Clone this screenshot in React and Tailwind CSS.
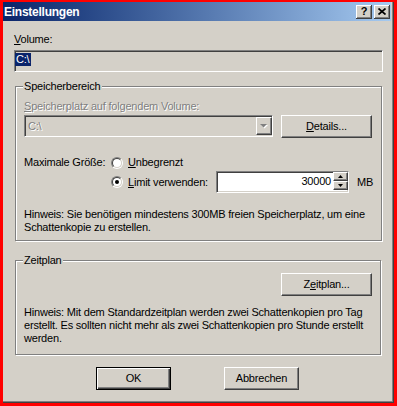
import React from 'react';

const sunken =
  'border border-t-[#808080] border-l-[#808080] border-r-white border-b-white shadow-[inset_1px_1px_0_#404040,inset_-1px_-1px_0_#d4d0c8]';
const raised =
  'border border-t-white border-l-white border-r-[#404040] border-b-[#404040] shadow-[inset_-1px_-1px_0_#808080]';
const disabledText = 'text-[#808080] [text-shadow:1px_1px_0_#fff]';

function Button({ children, className = 'w-[91px]' }) {
  return (
    <div className={`h-[23px] flex items-center justify-center ${raised} ${className}`}>
      <span className="leading-[13px]">{children}</span>
    </div>
  );
}

function Radio({ checked }) {
  return (
    <span className="w-[12px] h-[12px] shrink-0 flex rounded-full border border-t-[#808080] border-l-[#808080] border-r-white border-b-white">
      <span className="flex-1 flex items-center justify-center rounded-full border border-t-[#404040] border-l-[#404040] border-r-[#d4d0c8] border-b-[#d4d0c8] bg-white">
        {checked && <span className="w-[4px] h-[4px] rounded-full bg-black" />}
      </span>
    </span>
  );
}

function Arrow({ up, color = '#000' }) {
  return (
    <svg width="5" height="3" viewBox="0 0 5 3">
      <path d={up ? 'M2.5 0 L5 3 L0 3 Z' : 'M0 0 L5 0 L2.5 3 Z'} fill={color} />
    </svg>
  );
}

function CaptionButton({ children, className = '' }) {
  return (
    <div className={`w-[16px] h-[14px] bg-[#d4d0c8] flex items-center justify-center shadow-[inset_-1px_-1px_0_#404040,inset_1px_1px_0_#fff,inset_-2px_-2px_0_#808080] ${className}`}>
      {children}
    </div>
  );
}

export default function App() {
  return (
    <div className="w-[397px] h-[406px] bg-[#ff0000] pt-[2px] pl-[3px] pr-[3px] pb-[3px] font-['Liberation_Sans',Arial,sans-serif] text-[11px] leading-[13px] tracking-[-0.2px] text-black">
      <div className="h-full border-r border-b border-r-[#404040] border-b-[#404040]">
        <div className="h-full flex flex-col bg-[#d4d0c8] border-r border-b border-r-[#808080] border-b-[#808080] pr-[1px]">
          {/* Title bar */}
          <div className="h-[19px] flex items-center bg-linear-to-r from-[#0a246a] to-[#a6caf0] pl-[1px] pr-[1px]">
            <span className="flex-1 text-white font-bold text-[12px] tracking-[-0.25px] leading-[14px]">Einstellungen</span>
            <CaptionButton>
              <span className="font-bold text-[11px] leading-[11px] tracking-normal">?</span>
            </CaptionButton>
            <CaptionButton className="ml-[2px]">
              <svg width="8" height="7" viewBox="0 0 8 7">
                <path d="M0.5 0.5 L7.5 6.5 M7.5 0.5 L0.5 6.5" stroke="#000" strokeWidth="1.7" />
              </svg>
            </CaptionButton>
          </div>

          <div className="flex flex-col pl-[11px]">
            <div className="mt-[12px]">
              <u>V</u>olume:
            </div>
            <div className={`mt-[4px] h-[22px] w-[369px] pt-[2px] bg-[#d4d0c8] ${sunken}`}>
              <span className="inline-block bg-[#0a246a] text-white pl-[1px] pr-[2px]">C:\</span>
            </div>

            {/* Speicherbereich */}
            <fieldset className="mt-[8px] ml-[1px] w-[366px] px-[8px] pb-[6px] border border-[#808080] shadow-[1px_1px_0_#fff,inset_1px_1px_0_#fff]">
              <legend className="-ml-[1px] px-[1px] bg-[#d4d0c8]">Speicherbereich</legend>
              <div className={`mt-[7px] ${disabledText}`}>
                <u>S</u>peicherplatz auf folgendem Volume:
              </div>
              <div className="mt-[2px] flex items-start">
                <div className={`h-[22px] w-[249px] flex items-center bg-[#d4d0c8] ${sunken}`}>
                  <span className={`flex-1 pl-[3px] ${disabledText}`}>C:\</span>
                  <div className={`h-[18px] w-[16px] flex items-center justify-center bg-[#d4d0c8] ${raised}`}>
                    <svg width="8" height="5" viewBox="0 0 8 5">
                      <path d="M1 1 L8 1 L4.5 4.5 Z" fill="#fff" />
                      <path d="M0 0 L7 0 L3.5 3.5 Z" fill="#808080" />
                    </svg>
                  </div>
                </div>
                <Button className="w-[91px] ml-[8px]">
                  <u>D</u>etails...
                </Button>
              </div>

              <div className="mt-[18px] h-[13px] flex items-center">
                <span className="w-[87px]">Maximale Größe:</span>
                <Radio />
                <span className="ml-[5px]">
                  <u>U</u>nbegrenzt
                </span>
              </div>
              <div className="mt-[2px] flex items-center">
                <span className="w-[87px]" />
                <Radio checked />
                <span className="ml-[5px] w-[88px]">
                  <u>L</u>imit verwenden:
                </span>
                <div className={`h-[22px] w-[133px] flex bg-white ${sunken}`}>
                  <span className="flex-1 text-right pr-[2px] pt-[3px]">30000</span>
                  <div className="w-[15px] flex flex-col">
                    <div className={`h-[9px] flex items-center justify-center bg-[#d4d0c8] ${raised}`}>
                      <Arrow up />
                    </div>
                    <div className={`h-[9px] flex items-center justify-center bg-[#d4d0c8] ${raised}`}>
                      <Arrow />
                    </div>
                  </div>
                </div>
                <span className="ml-[8px]">MB</span>
              </div>

              <div className="mt-[15px] whitespace-nowrap">
                Hinweis: Sie benötigen mindestens 300MB freien Speicherplatz, um eine
                <br />
                Schattenkopie zu erstellen.
              </div>
            </fieldset>

            {/* Zeitplan */}
            <fieldset className="mt-[13px] ml-[1px] w-[366px] px-[8px] pb-[9px] border border-[#808080] shadow-[1px_1px_0_#fff,inset_1px_1px_0_#fff] flex flex-col">
              <legend className="-ml-[1px] px-[1px] bg-[#d4d0c8]">Zeitplan</legend>
              <Button className="w-[91px] mt-[6px] self-end">
                Z<u>e</u>itplan...
              </Button>
              <div className="mt-[10px] whitespace-nowrap">
                Hinweis: Mit dem Standardzeitplan werden zwei Schattenkopien pro Tag
                <br />
                erstellt. Es sollten nicht mehr als zwei Schattenkopien pro Stunde erstellt
                <br />
                werden.
              </div>
            </fieldset>

            <div className="mt-[12px] ml-[82px] flex gap-[53px]">
              <div className="h-[23px] w-[75px] flex items-center justify-center border border-black shadow-[inset_1px_1px_0_#fff,inset_-1px_-1px_0_#404040,inset_-2px_-2px_0_#808080]">
                OK
              </div>
              <Button className="w-[75px]">Abbrechen</Button>
            </div>
          </div>
        </div>
      </div>
    </div>
  );
}
